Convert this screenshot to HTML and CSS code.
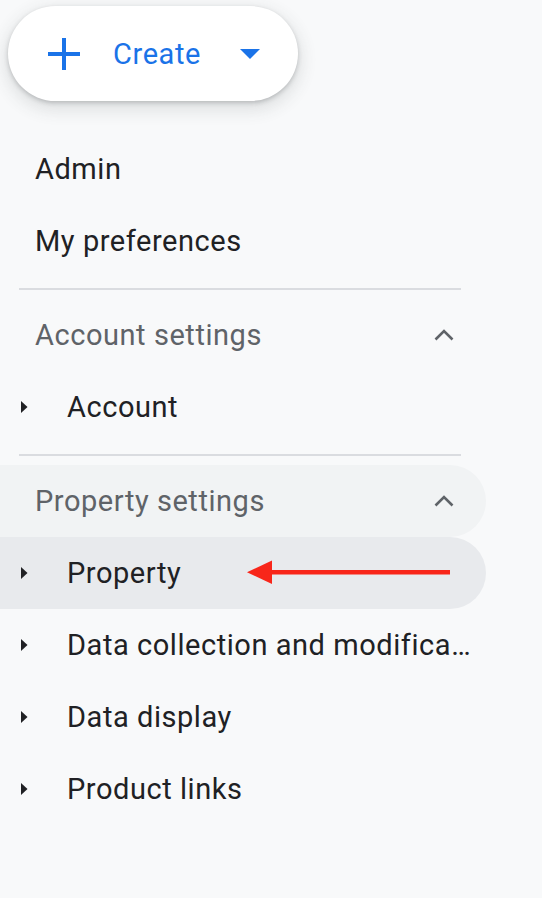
FILE: index.html
```html
<!DOCTYPE html>
<html lang="en">
<head>
<meta charset="utf-8">
<title>Admin navigation</title>
<link rel="stylesheet" href="styles.css">
</head>
<body>
<aside class="sidebar">
  <div class="create-wrap">
    <button class="create" type="button">
      <svg class="plus" width="32" height="32" viewBox="0 0 32 32" aria-hidden="true">
        <path d="M16 0v32M0 16h32" stroke="currentColor" stroke-width="4" fill="none"/>
      </svg>
      <span class="create-label">Create</span>
      <svg class="drop" width="20" height="10" viewBox="0 0 20 10" aria-hidden="true">
        <path d="M0 0h20L10 10z" fill="currentColor"/>
      </svg>
    </button>
  </div>

  <nav class="nav">
    <div class="item">Admin</div>
    <div class="item">My preferences</div>
    <div class="divider"></div>

    <div class="section">
      <span>Account settings</span>
      <svg class="chev" width="20" height="12" viewBox="0 0 20 12" aria-hidden="true">
        <path d="M1.5 10.5L10 2l8.5 8.5" stroke="currentColor" stroke-width="2.6" fill="none"/>
      </svg>
    </div>
    <div class="sub">
      <svg class="caret" width="8" height="12" viewBox="0 0 8 12" aria-hidden="true"><path d="M1 0l6.5 6-6.5 6z" fill="currentColor"/></svg>
      <span class="label">Account</span>
    </div>
    <div class="divider"></div>

    <div class="section hl">
      <span>Property settings</span>
      <svg class="chev" width="20" height="12" viewBox="0 0 20 12" aria-hidden="true">
        <path d="M1.5 10.5L10 2l8.5 8.5" stroke="currentColor" stroke-width="2.6" fill="none"/>
      </svg>
    </div>
    <div class="sub active">
      <svg class="caret" width="8" height="12" viewBox="0 0 8 12" aria-hidden="true"><path d="M1 0l6.5 6-6.5 6z" fill="currentColor"/></svg>
      <span class="label">Property</span>
      <svg class="arrow" width="206" height="26" viewBox="0 0 206 26" aria-hidden="true">
        <path d="M22 11h181v4.5H22z" fill="#f8261a"/>
        <path d="M0 13.25L25 1.5v23.5z" fill="#f8261a"/>
      </svg>
    </div>
    <div class="sub">
      <svg class="caret" width="8" height="12" viewBox="0 0 8 12" aria-hidden="true"><path d="M1 0l6.5 6-6.5 6z" fill="currentColor"/></svg>
      <span class="label">Data collection and modifica…</span>
    </div>
    <div class="sub">
      <svg class="caret" width="8" height="12" viewBox="0 0 8 12" aria-hidden="true"><path d="M1 0l6.5 6-6.5 6z" fill="currentColor"/></svg>
      <span class="label">Data display</span>
    </div>
    <div class="sub">
      <svg class="caret" width="8" height="12" viewBox="0 0 8 12" aria-hidden="true"><path d="M1 0l6.5 6-6.5 6z" fill="currentColor"/></svg>
      <span class="label">Product links</span>
    </div>
  </nav>
</aside>
</body>
</html>
```

FILE: styles.css
```css
html, body {
  margin: 0;
  padding: 0;
  background: #f8f9fa;
}

body {
  font-family: Roboto, "Noto Sans", sans-serif;
  font-size: 29px;
  letter-spacing: 0.55px;
  color: #202124;
  height: 898px;
  overflow: hidden;
}

.sidebar {
  width: 486px;
}

.create-wrap {
  padding: 6px 0 0 8px;
}

.create {
  display: flex;
  align-items: center;
  width: 290px;
  height: 95px;
  padding: 0 0 0 40px;
  box-sizing: border-box;
  border: none;
  border-radius: 48px;
  background: #ffffff;
  color: #1a73e8;
  box-shadow: 0 2px 4px rgba(60, 64, 67, 0.25), 0 6px 16px 4px rgba(60, 64, 67, 0.12);
  font: inherit;
  letter-spacing: 0.6px;
}

.create-label {
  margin-left: 33px;
  color: #1a73e8;
}

.drop {
  margin-left: auto;
  margin-right: 38px;
}

.nav {
  margin-top: 32px;
}

.item {
  height: 72px;
  display: flex;
  align-items: center;
  padding-left: 35px;
}

.divider {
  height: 2px;
  background: #dadce0;
  margin: 11px 25px 9px 19px;
}

.section {
  height: 72px;
  display: flex;
  align-items: center;
  padding: 0 32px 0 35px;
  color: #5f6368;
}

.chev {
  margin-left: auto;
  color: #5f6368;
}

.hl {
  background: #f1f3f4;
  border-radius: 0 36px 36px 0;
}

.sub {
  position: relative;
  height: 72px;
  display: flex;
  align-items: center;
  padding-left: 20px;
  padding-right: 10px;
}

.sub.active {
  background: #e8eaed;
  border-radius: 0 36px 36px 0;
}

.caret {
  flex: none;
  color: #202124;
}

.label {
  margin-left: 39px;
  white-space: nowrap;
}

.arrow {
  position: absolute;
  left: 247px;
  top: 22px;
}
```
